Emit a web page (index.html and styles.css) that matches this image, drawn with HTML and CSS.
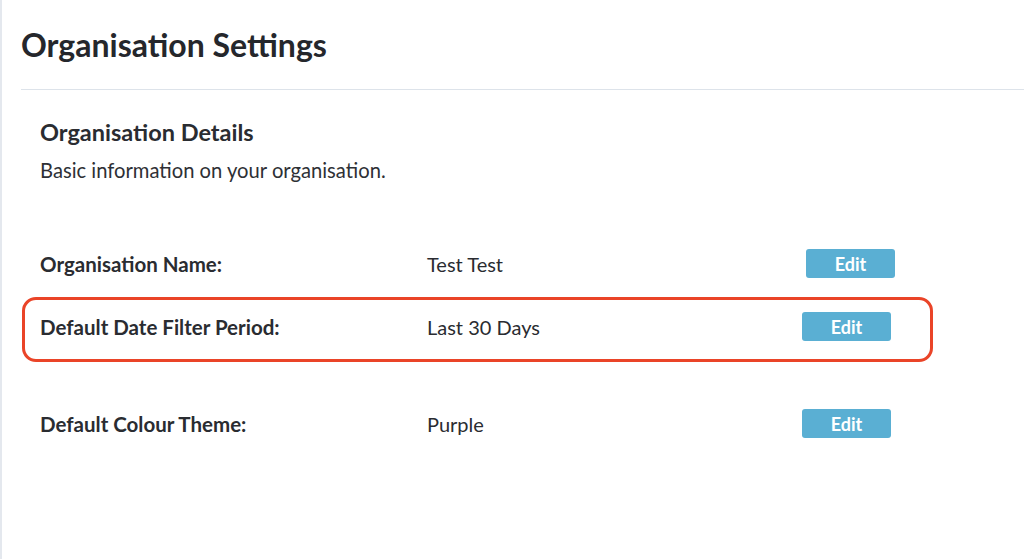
FILE: index.html
```html
<!DOCTYPE html>
<html lang="en">
<head>
<meta charset="utf-8">
<title>Organisation Settings</title>
<link rel="stylesheet" href="styles.css">
</head>
<body>
<div class="page">
  <header class="page-header">
    <h1 class="page-title">Organisation Settings</h1>
  </header>
  <section class="section">
    <h2 class="section-title">Organisation Details</h2>
    <p class="section-desc">Basic information on your organisation.</p>
    <div class="rows">
      <div class="row row--first">
        <div class="row-label">Organisation Name:</div>
        <div class="row-value">Test Test</div>
        <button class="btn-edit">Edit</button>
      </div>
      <div class="row row--highlight">
        <div class="row-label">Default Date Filter Period:</div>
        <div class="row-value">Last 30 Days</div>
        <button class="btn-edit">Edit</button>
      </div>
      <div class="row row--last">
        <div class="row-label">Default Colour Theme:</div>
        <div class="row-value">Purple</div>
        <button class="btn-edit">Edit</button>
      </div>
    </div>
  </section>
</div>
</body>
</html>
```
FILE: styles.css
```css
* { box-sizing: border-box; }
html, body { margin: 0; padding: 0; background: #fff; }
body {
  font-family: Lato, "Liberation Sans", sans-serif;
  color: #2a2c31;
}
.page {
  min-height: 559px;
  border-left: 2px solid #e4e8ee;
}
.page-header {
  margin-left: 19px;
  padding-top: 26px;
  padding-bottom: 25px;
  border-bottom: 1px solid #dde3ea;
}
.page-title {
  margin: 0;
  font-size: 32px;
  line-height: 38px;
  font-weight: 700;
  color: #25272c;
}
.section {
  padding: 28px 0 0 38px;
}
.section-title {
  margin: 0;
  font-size: 23.5px;
  line-height: 28px;
  font-weight: 700;
  color: #2a2c31;
}
.section-desc {
  margin: 12px 0 0;
  font-size: 20.2px;
  line-height: 24px;
  font-weight: 400;
  color: #2e3035;
}
.rows {
  margin-top: 67px;
}
.row {
  display: grid;
  grid-template-columns: 387px 375px 89px;
  align-items: center;
  font-size: 20px;
}
.row-label { font-weight: 700; font-size: 20.5px; }
.row-value { font-weight: 400; }
.btn-edit {
  height: 29px;
  width: 89px;
  border: 0;
  border-radius: 3px;
  background: #5aafd3;
  color: #fff;
  font-family: Lato, "Liberation Sans", sans-serif;
  font-size: 18px;
  font-weight: 700;
  padding: 0;
}
.row--first .btn-edit { margin-left: 4px; }
.row--highlight {
  margin: 19px 0 0 -18px;
  width: 911px;
  height: 65px;
  padding-left: 15px;
  padding-bottom: 6px;
  border: 3px solid #ea4428;
  border-radius: 14px;
}
.row--last {
  margin-top: 47px;
}
```
